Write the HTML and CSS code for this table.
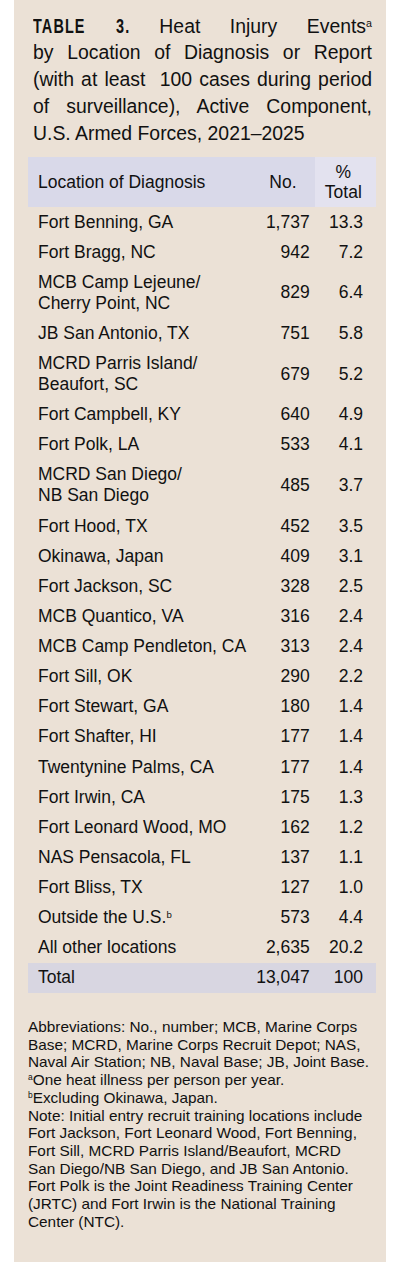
FILE: index.html
```html
<!DOCTYPE html>
<html lang="en">
<head>
<meta charset="utf-8">
<title>Table 3. Heat Injury Events by Location</title>
<link rel="stylesheet" href="styles.css">
</head>
<body>
<div class="panel">
  <div class="title">
    <span class="tl"><span class="label label-word">TABLE</span> <span class="label label-num">3.</span> Heat Injury Events<sup class="sup">a</sup></span>
    <span class="tl">by Location of Diagnosis or Report</span>
    <span class="tl">(with at least&nbsp; 100 cases during period</span>
    <span class="tl">of surveillance), Active Component,</span>
    <span class="tl last">U.S. Armed Forces, 2021–2025</span>
  </div>

  <table class="data">
    <thead>
      <tr>
        <th class="loc">Location of Diagnosis</th>
        <th class="num">No.</th>
        <th class="pct">%<br>Total</th>
      </tr>
    </thead>
    <tbody>
      <tr><td class="loc">Fort Benning, GA</td><td class="num">1,737</td><td class="pct">13.3</td></tr>
      <tr><td class="loc">Fort Bragg, NC</td><td class="num">942</td><td class="pct">7.2</td></tr>
      <tr><td class="loc">MCB Camp Lejeune/<br>Cherry Point, NC</td><td class="num">829</td><td class="pct">6.4</td></tr>
      <tr><td class="loc">JB San Antonio, TX</td><td class="num">751</td><td class="pct">5.8</td></tr>
      <tr><td class="loc">MCRD Parris Island/<br>Beaufort, SC</td><td class="num">679</td><td class="pct">5.2</td></tr>
      <tr><td class="loc">Fort Campbell, KY</td><td class="num">640</td><td class="pct">4.9</td></tr>
      <tr><td class="loc">Fort Polk, LA</td><td class="num">533</td><td class="pct">4.1</td></tr>
      <tr><td class="loc">MCRD San Diego/<br>NB San Diego</td><td class="num">485</td><td class="pct">3.7</td></tr>
      <tr><td class="loc">Fort Hood, TX</td><td class="num">452</td><td class="pct">3.5</td></tr>
      <tr><td class="loc">Okinawa, Japan</td><td class="num">409</td><td class="pct">3.1</td></tr>
      <tr><td class="loc">Fort Jackson, SC</td><td class="num">328</td><td class="pct">2.5</td></tr>
      <tr><td class="loc">MCB Quantico, VA</td><td class="num">316</td><td class="pct">2.4</td></tr>
      <tr><td class="loc">MCB Camp Pendleton, CA</td><td class="num">313</td><td class="pct">2.4</td></tr>
      <tr><td class="loc">Fort Sill, OK</td><td class="num">290</td><td class="pct">2.2</td></tr>
      <tr><td class="loc">Fort Stewart, GA</td><td class="num">180</td><td class="pct">1.4</td></tr>
      <tr><td class="loc">Fort Shafter, HI</td><td class="num">177</td><td class="pct">1.4</td></tr>
      <tr><td class="loc">Twentynine Palms, CA</td><td class="num">177</td><td class="pct">1.4</td></tr>
      <tr><td class="loc">Fort Irwin, CA</td><td class="num">175</td><td class="pct">1.3</td></tr>
      <tr><td class="loc">Fort Leonard Wood, MO</td><td class="num">162</td><td class="pct">1.2</td></tr>
      <tr><td class="loc">NAS Pensacola, FL</td><td class="num">137</td><td class="pct">1.1</td></tr>
      <tr><td class="loc">Fort Bliss, TX</td><td class="num">127</td><td class="pct">1.0</td></tr>
      <tr><td class="loc">Outside the U.S.<sup class="sup">b</sup></td><td class="num">573</td><td class="pct">4.4</td></tr>
      <tr><td class="loc">All other locations</td><td class="num">2,635</td><td class="pct">20.2</td></tr>
    </tbody>
    <tfoot>
      <tr><td class="loc">Total</td><td class="num">13,047</td><td class="pct">100</td></tr>
    </tfoot>
  </table>

  <div class="notes">
    <p>Abbreviations: No., number; MCB, Marine Corps<br>Base; MCRD, Marine Corps Recruit Depot; NAS,<br>Naval Air Station; NB, Naval Base; JB, Joint Base.</p>
    <p><sup class="sup">a</sup>One heat illness per person per year.</p>
    <p><sup class="sup">b</sup>Excluding Okinawa, Japan.</p>
    <p>Note: Initial entry recruit training locations include<br>Fort Jackson, Fort Leonard Wood, Fort Benning,<br>Fort Sill, MCRD Parris Island/Beaufort, MCRD<br>San Diego/NB San Diego, and JB San Antonio.<br>Fort Polk is the Joint Readiness Training Center<br>(JRTC) and Fort Irwin is the National Training<br>Center (NTC).</p>
  </div>
</div>
</body>
</html>
```

FILE: styles.css
```css
html, body {
  margin: 0;
  padding: 0;
  background: #ffffff;
}

body {
  font-family: "Liberation Sans", Arial, sans-serif;
  color: #111111;
}

.panel {
  margin: 0 14px;
  min-height: 1262px;
  box-sizing: border-box;
  background: #ebe1d6;
  padding: 12.7px 10px 20px 14px;
}

.title {
  margin: 0 4px 0 5px;
  font-size: 19.4px;
  line-height: 26.7px;
}

.tl {
  display: block;
  text-align: justify;
  text-align-last: justify;
}

.tl.last {
  text-align: left;
  text-align-last: left;
}

.label {
  display: inline-block;
  font-family: "Liberation Sans", Arial, sans-serif;
  font-weight: bold;
  font-size: 19.5px;
  letter-spacing: 1.5px;
  transform: scaleX(0.74);
  transform-origin: left center;
}

.label-word {
  margin-right: -18px;
}

.label-num {
  margin-right: -5px;
}

.sup {
  font-size: 0.55em;
  line-height: 0;
  vertical-align: 0.55em;
}

.data {
  margin-top: 10.8px;
  width: 348px;
  border-collapse: collapse;
  font-size: 17.5px;
}

.data th {
  font-weight: normal;
  line-height: 20px;
  padding: 5px;
  background: #d9d9e9;
  vertical-align: middle;
}

.data th.loc {
  text-align: left;
  padding-left: 10px;
}

.data th.num {
  width: 51px;
  text-align: center;
}

.data th.pct {
  width: 40px;
  text-align: center;
  padding: 5px 13px 5px 9px;
  background: #e3e2ef;
}

.data td {
  line-height: 21px;
  padding: 4.57px 5px;
  white-space: nowrap;
}

.data td.loc {
  padding-left: 10px;
}

.data td.num {
  text-align: right;
  padding-right: 5px;
}

.data td.pct {
  text-align: right;
  padding-right: 13px;
}

.data tfoot td {
  background: #d8d6e1;
}

.notes {
  margin-top: 25px;
  font-size: 15.35px;
  line-height: 17.7px;
}

.notes p {
  margin: 0;
  white-space: nowrap;
}
```
